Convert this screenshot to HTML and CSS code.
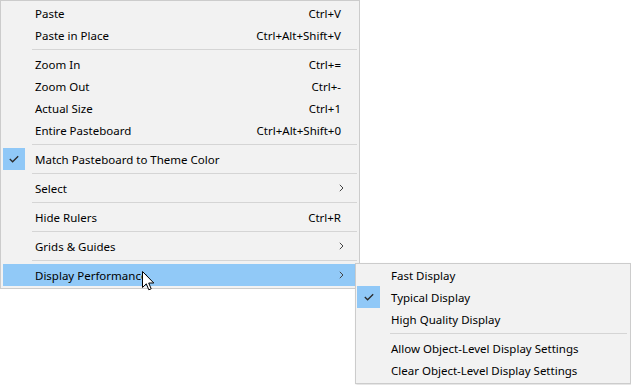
FILE: index.html
```html
<!DOCTYPE html>
<html>
<head>
<meta charset="utf-8">
<link rel="stylesheet" href="styles.css">
</head>
<body>
<div class="stage">
  <div class="menu main">
    <div class="item"><span class="icon"></span><span class="label">Paste</span><span class="key">Ctrl+V</span></div>
    <div class="item"><span class="icon"></span><span class="label">Paste in Place</span><span class="key">Ctrl+Alt+Shift+V</span></div>
    <div class="sep"></div>
    <div class="item"><span class="icon"></span><span class="label">Zoom In</span><span class="key">Ctrl+=</span></div>
    <div class="item"><span class="icon"></span><span class="label">Zoom Out</span><span class="key">Ctrl+-</span></div>
    <div class="item"><span class="icon"></span><span class="label">Actual Size</span><span class="key">Ctrl+1</span></div>
    <div class="item"><span class="icon"></span><span class="label">Entire Pasteboard</span><span class="key">Ctrl+Alt+Shift+0</span></div>
    <div class="sep"></div>
    <div class="item"><span class="icon checked"><svg width="10" height="8" viewBox="0 0 10 8"><path d="M0.8 4 L3.6 6.8 L9.2 1.2" fill="none" stroke="#2b2b2b" stroke-width="1.3"/></svg></span><span class="label">Match Pasteboard to Theme Color</span></div>
    <div class="sep"></div>
    <div class="item"><span class="icon"></span><span class="label">Select</span><span class="arrow"><svg width="5" height="8" viewBox="0 0 5 8"><path d="M0.8 0.8 L4 4 L0.8 7.2" fill="none" stroke="#444" stroke-width="1"/></svg></span></div>
    <div class="sep"></div>
    <div class="item"><span class="icon"></span><span class="label">Hide Rulers</span><span class="key">Ctrl+R</span></div>
    <div class="sep"></div>
    <div class="item"><span class="icon"></span><span class="label">Grids &amp; Guides</span><span class="arrow"><svg width="5" height="8" viewBox="0 0 5 8"><path d="M0.8 0.8 L4 4 L0.8 7.2" fill="none" stroke="#444" stroke-width="1"/></svg></span></div>
    <div class="sep"></div>
    <div class="item active"><span class="icon"></span><span class="label">Display Performance</span><span class="arrow"><svg width="5" height="8" viewBox="0 0 5 8"><path d="M0.8 0.8 L4 4 L0.8 7.2" fill="none" stroke="#444" stroke-width="1"/></svg></span></div>
  </div>

  <div class="menu sub">
    <div class="item"><span class="icon"></span><span class="label">Fast Display</span></div>
    <div class="item"><span class="icon checked"><svg width="10" height="8" viewBox="0 0 10 8"><path d="M0.8 4 L3.6 6.8 L9.2 1.2" fill="none" stroke="#2b2b2b" stroke-width="1.3"/></svg></span><span class="label">Typical Display</span></div>
    <div class="item"><span class="icon"></span><span class="label">High Quality Display</span></div>
    <div class="sep"></div>
    <div class="item"><span class="icon"></span><span class="label">Allow Object-Level Display Settings</span></div>
    <div class="item"><span class="icon"></span><span class="label">Clear Object-Level Display Settings</span></div>
  </div>

  <svg class="cursor" width="13" height="21" viewBox="0 0 13 21">
    <path d="M0.5 0.5 L0.5 16.5 L4.3 12.8 L6.8 18.8 L9.2 17.8 L6.7 12 L11.8 12 Z" fill="#fff" stroke="#000" stroke-width="1" stroke-linejoin="miter"/>
  </svg>
</div>
</body>
</html>
```

FILE: styles.css
```css
html, body {
  margin: 0;
  padding: 0;
  background: #ffffff;
}

.stage {
  position: relative;
  width: 631px;
  height: 385px;
  overflow: hidden;
  font-family: "Noto Sans", "Open Sans", sans-serif;
  font-size: 11.5px;
  color: #000;
}

.menu {
  background: #f2f2f2;
  border: 1px solid #cccccc;
  box-sizing: border-box;
}

.main {
  width: 360px;
  padding: 1px 2px 2px 2px;
}

.sub {
  position: absolute;
  left: 355px;
  top: 263px;
  width: 276px;
  padding: 0 1px 2px 1px;
  box-shadow: 1px 1px 2px rgba(0,0,0,0.15);
}

.item {
  display: flex;
  align-items: center;
  height: 22px;
  white-space: nowrap;
}

.item.active {
  background: #91c9f7;
}

.icon {
  width: 22px;
  height: 22px;
  flex: none;
  display: flex;
  align-items: center;
  justify-content: center;
}

.icon.checked {
  background: #90c8f7;
}

.label {
  flex: 1;
  margin-left: 10px;
  margin-top: 2px;
  line-height: 20px;
}

.sub .icon {
  width: 23px;
}

.sub .label {
  margin-left: 11px;
}

.key {
  margin-right: 16px;
  margin-top: 2px;
  line-height: 20px;
}

.arrow {
  width: 12px;
  margin-right: 6px;
  display: flex;
  align-items: center;
}

.sep {
  height: 7px;
  margin-left: 29px;
  display: flex;
  align-items: center;
}

.sep::before {
  content: "";
  flex: 1;
  height: 1px;
  background: #d5d5d5;
}

.sub .sep {
  margin-left: 33px;
  margin-right: 2px;
}

.cursor {
  position: absolute;
  left: 142px;
  top: 271px;
}
```
